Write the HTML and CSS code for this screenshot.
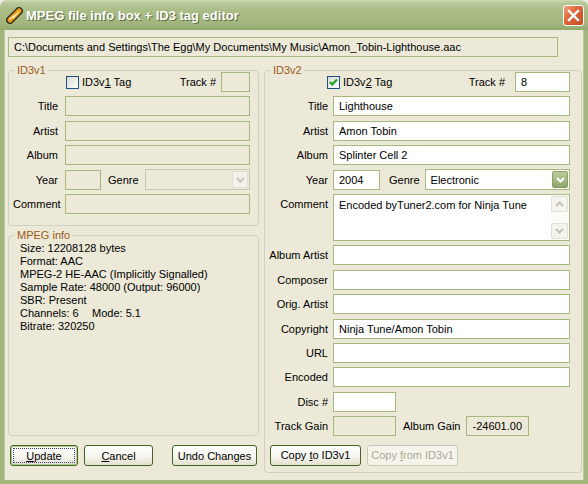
FILE: index.html
```html
<!DOCTYPE html>
<html lang="en">
<head>
    <meta charset="UTF-8">
    <title>MPEG file info box + ID3 tag editor</title>
    <link rel="stylesheet" href="styles.css">
</head>
<body>

<div class="window">
    <div class="titlebar">
        <svg class="app-icon" width="17" height="17" viewBox="0 0 17 17">
            <path d="M4 13 L13 4" stroke="#3a3520" stroke-width="8" stroke-linecap="round"/>
            <path d="M4 13 L13 4" stroke="#f39a1a" stroke-width="5" stroke-linecap="round"/>
            <path d="M3.6 12.2 L8.6 8.6 L7.6 10.6 L12.8 4.6" fill="none" stroke="#fff2a8" stroke-width="1.4" stroke-linejoin="round"/>
        </svg>
        <span class="title">MPEG file info box + ID3 tag editor</span>
        <div class="close-btn">
            <svg width="13" height="13" viewBox="0 0 13 13">
                <path d="M2 2 L11 11 M11 2 L2 11" stroke="#fff" stroke-width="2.4" stroke-linecap="square"/>
            </svg>
        </div>
    </div>

    <div class="client">
        <div class="path-box">C:\Documents and Settings\The Egg\My Documents\My Music\Amon_Tobin-Lighthouse.aac</div>

        <div class="columns">
            <div class="left-col">
                <div class="group id3v1">
                    <span class="group-title">ID3v1</span>
                    <div class="form form-v1">
                        <div class="check-row">
                            <span class="checkbox"></span>
                            <span>ID3v<u>1</u> Tag</span>
                            <span class="track-label">Track #</span>
                            <input class="field disabled track-v1" type="text" disabled>
                        </div>
                        <label>Title</label>
                        <input class="field disabled" type="text" disabled>
                        <label>Artist</label>
                        <input class="field disabled" type="text" disabled>
                        <label>Album</label>
                        <input class="field disabled" type="text" disabled>
                        <label>Year</label>
                        <div class="year-row">
                            <input class="field disabled year-v1" type="text" disabled>
                            <label class="genre-label">Genre</label>
                            <div class="combo combo-disabled">
                                <span class="combo-value"></span>
                                <span class="combo-btn">
                                    <svg width="9" height="6" viewBox="0 0 9 6"><path d="M1 1 L4.5 4.5 L8 1" fill="none" stroke="#c8c6b8" stroke-width="2"/></svg>
                                </span>
                            </div>
                        </div>
                        <label>Comment</label>
                        <input class="field disabled" type="text" disabled>
                    </div>
                </div>

                <div class="group mpeg-info">
                    <span class="group-title">MPEG info</span>
                    <div class="info-lines">
                        <div>Size: 12208128 bytes</div>
                        <div>Format: AAC</div>
                        <div>MPEG-2 HE-AAC (Implicitly Signalled)</div>
                        <div>Sample Rate: 48000 (Output: 96000)</div>
                        <div>SBR: Present</div>
                        <div><span class="channels">Channels: 6</span>Mode: 5.1</div>
                        <div>Bitrate: 320250</div>
                    </div>
                </div>

                <div class="button-row left-buttons">
                    <button class="btn btn-default btn-update"><u>U</u>pdate</button>
                    <button class="btn btn-cancel"><u>C</u>ancel</button>
                    <button class="btn btn-undo">Undo Changes</button>
                </div>
            </div>

            <div class="group id3v2">
                <span class="group-title">ID3v2</span>
                <div class="form form-v2">
                    <div class="check-row">
                        <span class="checkbox checked">
                            <svg width="11" height="11" viewBox="0 0 11 11"><path d="M2 5 L4.3 7.5 L9 2.5" fill="none" stroke="#21a121" stroke-width="2.2"/></svg>
                        </span>
                        <span>ID3v<u>2</u> Tag</span>
                        <span class="track-label">Track #</span>
                        <input class="field track-v2" type="text" value="8">
                    </div>
                    <label>Title</label>
                    <input class="field" type="text" value="Lighthouse">
                    <label>Artist</label>
                    <input class="field" type="text" value="Amon Tobin">
                    <label>Album</label>
                    <input class="field" type="text" value="Splinter Cell 2">
                    <label>Year</label>
                    <div class="year-row">
                        <input class="field year-v2" type="text" value="2004">
                        <label class="genre-label">Genre</label>
                        <div class="combo">
                            <span class="combo-value">Electronic</span>
                            <span class="combo-btn">
                                <svg width="9" height="6" viewBox="0 0 9 6"><path d="M1 1 L4.5 4.5 L8 1" fill="none" stroke="#fff" stroke-width="2"/></svg>
                            </span>
                        </div>
                    </div>
                    <label class="top-label">Comment</label>
                    <div class="comment-box">
                        <span class="comment-text">Encoded byTuner2.com for Ninja Tune</span>
                        <div class="scrollbar">
                            <span class="scroll-btn">
                                <svg width="9" height="6" viewBox="0 0 9 6"><path d="M1 5 L4.5 1.5 L8 5" fill="none" stroke="#c3c2b6" stroke-width="2"/></svg>
                            </span>
                            <span class="scroll-btn">
                                <svg width="9" height="6" viewBox="0 0 9 6"><path d="M1 1 L4.5 4.5 L8 1" fill="none" stroke="#c3c2b6" stroke-width="2"/></svg>
                            </span>
                        </div>
                    </div>
                    <label>Album Artist</label>
                    <input class="field" type="text">
                    <label>Composer</label>
                    <input class="field" type="text">
                    <label>Orig. Artist</label>
                    <input class="field" type="text">
                    <label>Copyright</label>
                    <input class="field" type="text" value="Ninja Tune/Amon Tobin">
                    <label>URL</label>
                    <input class="field" type="text">
                    <label>Encoded</label>
                    <input class="field" type="text">
                    <label>Disc #</label>
                    <div class="short-row">
                        <input class="field short" type="text">
                    </div>
                    <label>Track Gain</label>
                    <div class="short-row">
                        <input class="field readonly short" type="text" readonly>
                        <label class="gain-label">Album Gain</label>
                        <input class="field readonly short" type="text" value="-24601.00" readonly>
                    </div>
                </div>

                <div class="button-row right-buttons">
                    <button class="btn btn-copy">Copy <u>t</u>o ID3v1</button>
                    <button class="btn btn-copy" disabled>Copy <u>f</u>rom ID3v1</button>
                </div>
            </div>
        </div>
    </div>
</div>

</body>
</html>
```

FILE: styles.css
```css
html {
    background-color: #eeede4;
}
body {
    margin: 0;
    padding: 0;
    font-family: "Liberation Sans", Arial, sans-serif;
    font-size: 11px;
    color: #000;
}
.window {
    width: 588px;
    height: 484px;
    display: flex;
    flex-direction: column;
}

/* Title bar */
.titlebar {
    height: 30px;
    flex-shrink: 0;
    display: flex;
    align-items: center;
    border-radius: 7px 7px 0 0;
    background: linear-gradient(#cfdbb2 0, #b7c898 3px, #aabd87 35%, #a1b57c 80%, #93aa6e 100%);
    position: relative;
}
.app-icon {
    margin-left: 6px;
    margin-top: 1px;
}
.title {
    margin-left: 3px;
    color: #fff;
    font-weight: bold;
    font-size: 13px;
    text-shadow: 1px 1px 0 #5c6e3c;
}
.close-btn {
    position: absolute;
    right: 4px;
    top: 5px;
    width: 19px;
    height: 19px;
    border: 1px solid #fff;
    border-radius: 3px;
    background: linear-gradient(135deg, #f0a080 0, #e0683e 40%, #c44a22 100%);
    display: flex;
    align-items: center;
    justify-content: center;
}

/* Window client area */
.client {
    flex: 1;
    background-color: #ece9d8;
    border: 4px solid #a3b67d;
    border-top: none;
    box-shadow: inset 1px 0 0 #bccb9e, inset -1px 0 0 #bccb9e;
    padding: 7px 2px 0 4px;
}
.path-box {
    box-sizing: border-box;
    width: 550px;
    height: 20px;
    line-height: 18px;
    border: 1px solid #a5b97f;
    padding-left: 5px;
    white-space: nowrap;
    overflow: hidden;
}
.columns {
    display: flex;
    gap: 5px;
    margin-top: 13px;
}
.left-col {
    width: 251px;
    display: flex;
    flex-direction: column;
}

/* Group boxes */
.group {
    position: relative;
    box-sizing: border-box;
    border: 1px solid #d0d0bf;
    border-radius: 4px;
}
.group-title {
    position: absolute;
    top: -7px;
    left: 6px;
    padding: 0 2px;
    background-color: #ece9d8;
    color: #9b5a1a;
    line-height: 13px;
}
.id3v1 {
    height: 156px;
    padding: 1px 8px 0 4px;
}
.mpeg-info {
    height: 201px;
    margin-top: 9px;
}
.id3v2 {
    width: 318px;
    height: 403px;
    padding: 1px 11px 0 4px;
}

/* Forms */
.form {
    display: grid;
    grid-auto-rows: 20px;
    row-gap: 4.4px;
    align-items: center;
}
.form-v1 {
    grid-template-columns: 45px 185px;
    column-gap: 7px;
}
.form-v2 {
    grid-template-columns: 59px 237px;
    grid-template-rows: repeat(5, 20px) 47px;
    column-gap: 5px;
}
.form label {
    text-align: right;
    white-space: nowrap;
}
.form .top-label {
    align-self: start;
    padding-top: 4px;
}
.check-row {
    grid-column: 1 / -1;
    display: flex;
    align-items: center;
    height: 20px;
}
.form-v1 .checkbox {
    margin-left: 53px;
}
.form-v2 .checkbox {
    margin-left: 58px;
}
.checkbox {
    box-sizing: border-box;
    width: 13px;
    height: 13px;
    border: 1px solid #1c5180;
    background: linear-gradient(135deg, #dcdcd7, #fbfbf9);
    margin-right: 3px;
    display: flex;
    align-items: center;
    justify-content: center;
}
.track-label {
    margin-left: auto;
}
.form-v1 .track-label {
    margin-right: 5px;
}
.form-v2 .track-label {
    margin-right: 10px;
}
.field {
    box-sizing: border-box;
    height: 20px;
    width: 100%;
    margin: 0;
    border: 1px solid #a5b97f;
    background-color: #fff;
    padding: 0 0 0 5px;
    font-family: inherit;
    font-size: 11px;
    color: #000;
    outline: none;
}
.field.disabled,
.field.readonly {
    background-color: #ece9d8;
}
.track-v1 {
    width: 29px;
}
.track-v2 {
    width: 55px;
}
.year-row,
.short-row {
    display: flex;
    align-items: center;
    height: 20px;
}
.year-v1 {
    width: 36px;
}
.year-v2 {
    width: 47px;
}
.form-v1 .genre-label {
    margin: 0 6px 0 7px;
}
.form-v2 .genre-label {
    margin: 0 5px 0 9px;
}
.short {
    width: 63px;
}
.gain-label {
    margin: 0 6px 0 7px;
}

/* Combo boxes */
.combo {
    flex: 1;
    box-sizing: border-box;
    height: 21px;
    border: 1px solid #a5b97f;
    background-color: #fff;
    display: flex;
    align-items: center;
    padding: 1px;
}
.combo-value {
    flex: 1;
    padding-left: 4px;
}
.combo-btn {
    width: 16px;
    height: 17px;
    border-radius: 2px;
    background: linear-gradient(#bccc9c, #a3b77f 60%, #8da569);
    border: 1px solid #8a9f68;
    box-sizing: border-box;
    display: flex;
    align-items: center;
    justify-content: center;
}
.combo-disabled {
    border-color: #c9c7ba;
    background-color: #ece9d8;
}
.combo-disabled .combo-btn {
    background: #f2f1ea;
    border-color: #e0ded2;
}

/* Comment box */
.comment-box {
    box-sizing: border-box;
    height: 47px;
    border: 1px solid #a5b97f;
    background-color: #fff;
    display: flex;
}
.comment-text {
    flex: 1;
    padding: 4px 0 0 5px;
}
.scrollbar {
    width: 17px;
    margin: 1px 1px 1px 0;
    background-color: #fbfbf7;
    display: flex;
    flex-direction: column;
    justify-content: space-between;
}
.scroll-btn {
    height: 16px;
    box-sizing: border-box;
    border: 1px solid #e3e1d6;
    border-radius: 2px;
    background-color: #f4f3ec;
    display: flex;
    align-items: center;
    justify-content: center;
}

/* MPEG info text */
.info-lines {
    padding: 6px 0 0 11px;
    line-height: 13px;
}
.channels {
    display: inline-block;
    width: 72px;
}

/* Buttons */
.button-row {
    display: flex;
    height: 21px;
}
.left-buttons {
    margin-top: 9px;
    padding-left: 2px;
}
.right-buttons {
    margin-top: 8.6px;
    padding-left: 1px;
    gap: 6px;
}
.btn {
    position: relative;
    box-sizing: border-box;
    height: 21px;
    padding: 0;
    border: 1px solid #3f6422;
    border-radius: 3px;
    background: linear-gradient(#ffffff, #f6f5ee 55%, #e4e1cf);
    font-family: inherit;
    font-size: 11px;
    color: #000;
}
.btn-update {
    width: 68px;
}
.btn-cancel {
    width: 69px;
    margin-left: 6px;
}
.btn-undo {
    width: 85px;
    margin-left: 19px;
}
.btn-copy {
    width: 91px;
}
.btn-default {
    box-shadow: inset 0 0 0 1px #b7cb91;
}
.btn-default::after {
    content: "";
    position: absolute;
    top: 2px;
    left: 2px;
    right: 2px;
    bottom: 2px;
    border: 1px dotted #3a3a8c;
}
.btn:disabled {
    border-color: #c9c7ba;
    background: #f5f4ea;
    color: #aca899;
}
```
